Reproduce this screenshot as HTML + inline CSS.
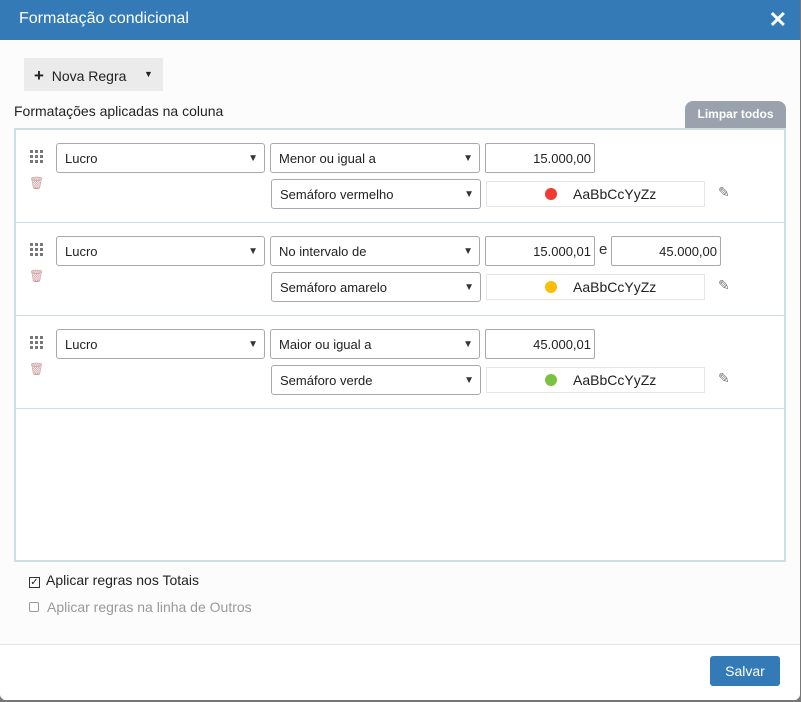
<!DOCTYPE html>
<html><head><meta charset="utf-8"><style>
*{box-sizing:border-box;margin:0;padding:0}
body{width:801px;height:702px;background:#777;font-family:"Liberation Sans",sans-serif;font-size:13px;color:#333;position:relative;overflow:hidden}
.dlg{position:absolute;left:0;top:0;width:800px;height:700px;background:#fcfcfc;border-radius:0 0 6px 6px;overflow:hidden}
.hdr{position:absolute;left:0;top:0;width:801px;height:40px;background:#337ab7;color:#fff;font-size:16px;padding:10px 0 0 19px}
.x{position:absolute;right:14px;top:7px;font-size:22px;font-weight:bold;color:#fff}
.a{position:absolute}
.btn{left:24px;top:58px;width:139px;height:33px;background:#ebebeb;padding:8px 0 0 10px;font-size:14px;color:#222}
.tab{left:685px;top:101px;width:101px;height:28px;background:#9aa3ad;color:#fff;border-radius:8px 8px 0 0;font-weight:bold;font-size:12px;text-align:center;padding-top:6px}
.panel{left:14px;top:128px;width:772px;height:434px;border:2px solid #cfdde6;background:#fff}
.sep{left:0;width:768px;height:1px;background:#cfdde6}
.sel{height:30px;border:1px solid #a9a9a9;border-radius:3px;background:#fff;padding:7px 0 0 8px;font-size:13px;color:#222}
.sel:after{content:"▼";position:absolute;right:6px;top:9px;font-size:10px;color:#333}
.inp{height:30px;border:1px solid #a9a9a9;border-radius:2px;background:#fff;text-align:right;padding:7px 3px 0 0;font-size:13px;color:#222}
.sty{height:26px;border:1px solid #e6e6e6;background:#fff}
.dot{position:absolute;left:58px;top:6px;width:12px;height:12px;border-radius:50%}
.st{position:absolute;left:86px;top:4px;font-size:14px;color:#222}
.grip{width:14px;height:13px;background:linear-gradient(90deg,#777 3px,transparent 3px) 0 0/5px 5px,#fff;}
.grip:after{content:"";position:absolute;inset:0;background:linear-gradient(#fff 2px,transparent 2px) 0 3px/5px 5px}
.pen{color:#777;font-size:14px}
.ftr{left:0;top:644px;width:801px;height:58px;background:#fff;border-top:1px solid #e5e5e5}
.save{left:710px;top:656px;width:70px;height:30px;background:#337ab7;border-radius:3px;color:#fff;font-size:14px;text-align:center;padding-top:7px}
</style></head><body><div class="dlg">
<div class="hdr">Formatação condicional<span class="x">✕</span></div>
<div class="a btn"><b style="font-size:17px">+</b>&nbsp; Nova Regra <span style="position:absolute;left:120px;top:11px;font-size:9px">▼</span></div>
<div class="a" style="left:14px;top:103px;font-size:14px;color:#222">Formatações aplicadas na coluna</div>
<div class="a tab">Limpar todos</div>
<div class="a panel">
<div class="a sep" style="top:92px"></div>
<div class="a sep" style="top:185px"></div>
<div class="a sep" style="top:278px"></div>
</div>
<div id="rows"></div>
<div class="a" style="left:29px;top:572px;font-size:14px;color:#222"><span style="border:1px solid #333;display:inline-block;width:11px;height:11px;line-height:10px;text-align:center;margin-right:6px;font-size:10px">✓</span>Aplicar regras nos Totais</div>
<div class="a" style="left:29px;top:599px;font-size:14px;color:#999"><span style="border:1px solid #999;display:inline-block;width:10px;height:10px;margin-right:8px;border-radius:2px"></span>Aplicar regras na linha de Outros</div>
<div class="a ftr"></div>
<div class="a save">Salvar</div>
</div>
<script>
var R=[[0,"Menor ou igual a","15.000,00",null,"Semáforo vermelho","#f03a32"],[93,"No intervalo de","15.000,01","45.000,00","Semáforo amarelo","#fbbd08"],[186,"Maior ou igual a","45.000,01",null,"Semáforo verde","#7cc241"]];
var h="";R.forEach(function(r){var y=r[0];
h+='<div class="a grip" style="left:30px;top:'+(150+y)+'px"></div>';
h+='<div class="a" style="left:29px;top:'+(176+y)+'px;color:#c99;font-size:12px">🗑</div>';
h+='<div class="a sel" style="left:56px;top:'+(143+y)+'px;width:209px">Lucro</div>';
h+='<div class="a sel" style="left:270px;top:'+(143+y)+'px;width:210px">'+r[1]+'</div>';
h+='<div class="a inp" style="left:485px;top:'+(143+y)+'px;width:110px">'+r[2]+'</div>';
if(r[3]){h+='<div class="a" style="left:599px;top:'+(148+y)+'px;font-size:15px">e</div><div class="a inp" style="left:611px;top:'+(143+y)+'px;width:110px">'+r[3]+'</div>';}
h+='<div class="a sel" style="left:271px;top:'+(179+y)+'px;width:210px">'+r[4]+'</div>';
h+='<div class="a sty" style="left:486px;top:'+(181+y)+'px;width:219px"><div class="dot" style="background:'+r[5]+'"></div><div class="st">AaBbCcYyZz</div></div>';
h+='<div class="a pen" style="left:718px;top:'+(184+y)+'px">✎</div>';});
document.getElementById("rows").innerHTML=h;
</script>
</body></html>
